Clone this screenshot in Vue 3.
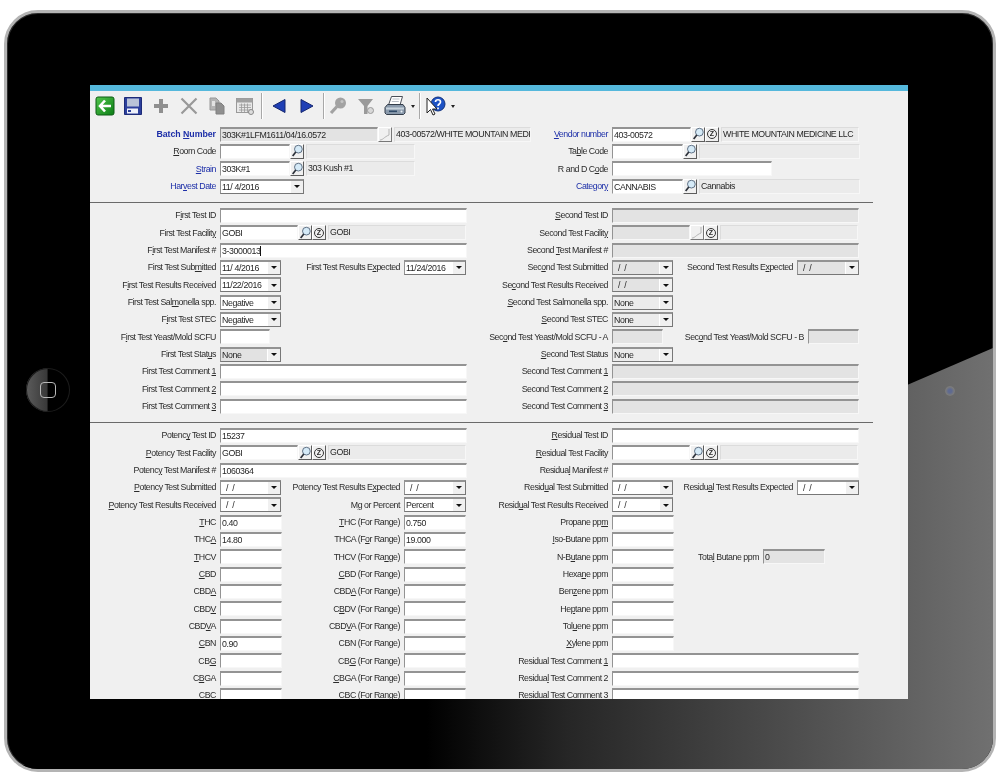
<template>
  <div class="tablet">
    <!-- bezel bits -->
    <div class="home"><span class="home-key"></span></div>
    <div class="camera"></div>

    <div class="screen">
      <div class="topbar"></div>

      <div class="toolbar">
        <span class="tool">
          <svg width="20" height="20" viewBox="0 0 20 20">
            <defs>
              <linearGradient id="backFill" x1="0" y1="0" x2="1" y2="1">
                <stop offset="0" stop-color="#52c64c" />
                <stop offset="1" stop-color="#0b7d16" />
              </linearGradient>
            </defs>
            <rect x="1" y="1" width="18" height="18" rx="2" fill="url(#backFill)" stroke="#0c5c14" />
            <path d="M10 4.500 5 10l5 5.500M5.500 10H16" stroke="#fff" stroke-width="2.600" fill="none" />
          </svg>
        </span>
        <span class="tool">
          <svg width="20" height="20" viewBox="0 0 20 20">
            <path d="M1.500 1.500h17v17h-17z" fill="#2c3f9c" stroke="#1d2b78" />
            <rect x="4" y="2.500" width="12" height="8" fill="#b9c3d8" />
            <rect x="4" y="12.500" width="11" height="5" fill="#eef1fa" />
            <rect x="5" y="14" width="3" height="2" fill="#2c3f9c" />
          </svg>
        </span>
        <span class="tool">
          <svg width="20" height="20" viewBox="0 0 20 20">
            <path d="M8 3h4v5h5v4h-5v5H8v-5H3V8h5z" fill="#8f8f8f" />
          </svg>
        </span>
        <span class="tool">
          <svg width="20" height="20" viewBox="0 0 20 20">
            <path d="m2.500 2.500 15 15M17.500 2.500l-15 15" stroke="#999" stroke-width="2.200" fill="none" />
          </svg>
        </span>
        <span class="tool">
          <svg width="20" height="20" viewBox="0 0 20 20">
            <path d="M3 2h6l3 3v9H3z" fill="#b4b4b4" stroke="#999" />
            <path d="M9 7h5l3 3v8H9z" fill="#8f8f8f" stroke="#808080" />
            <path d="M5 5h3v5H5z" fill="#e2e2e2" />
          </svg>
        </span>
        <span class="tool">
          <svg width="20" height="20" viewBox="0 0 20 20">
            <rect x="1.500" y="2.500" width="16" height="14" fill="#e8e8e8" stroke="#999" />
            <rect x="1.500" y="2.500" width="16" height="4" fill="#a0a0a0" />
            <path d="M4 9h12M4 11.500h12M4 14h12M6.500 7.500V16M9.500 7.500V16M12.500 7.500V16" stroke="#999" stroke-width=".8" />
            <circle cx="16" cy="16" r="2.500" fill="#ddd" stroke="#888" />
          </svg>
        </span>

        <span class="sep"></span>

        <span class="tool">
          <svg width="20" height="20" viewBox="0 0 20 20">
            <path d="M16 3.500v13L4 10z" fill="#1f3fb5" stroke="#14266f" />
          </svg>
        </span>
        <span class="tool">
          <svg width="20" height="20" viewBox="0 0 20 20">
            <path d="M4 3.500v13L16 10z" fill="#1f3fb5" stroke="#14266f" />
          </svg>
        </span>

        <span class="sep sep-b"></span>

        <span class="tool">
          <svg width="20" height="20" viewBox="0 0 20 20">
            <circle cx="12.500" cy="7" r="5.500" fill="#a2a2a2" />
            <circle cx="14" cy="5.500" r="1.500" fill="#c4c4c4" />
            <path d="m9 10.500-6 6.500" stroke="#a2a2a2" stroke-width="3.200" fill="none" />
          </svg>
        </span>
        <span class="tool">
          <svg width="20" height="20" viewBox="0 0 20 20">
            <path d="M2 3h15l-5.500 7v8H8v-8z" fill="#9a9a9a" />
            <circle cx="14.500" cy="14.500" r="3" fill="#d8d8d8" stroke="#999" />
          </svg>
        </span>
        <span class="tool tool-print">
          <svg width="22" height="22" viewBox="0 0 22 22">
            <path d="M7.500 1.500h11L16 10H4.500z" fill="#fff" stroke="#4a4f58" />
            <path d="M8.500 4h7M7.800 6.500h7" stroke="#b9bec6" />
            <path d="M3.500 9.500h15.500l2 3v5.500l-1.500 1.500h-17L1 18v-5.500z" fill="#8a9aac" stroke="#333d4a" />
            <path d="M2 12.500h18v2H2z" fill="#c6d2dc" />
            <rect x="5" y="15.500" width="8" height="1.600" fill="#2f4a68" />
            <circle cx="17.500" cy="16.500" r="1" fill="#e8f0f6" />
          </svg>
        </span>
        <span class="drop"></span>

        <span class="sep sep-c"></span>

        <span class="tool">
          <svg width="22" height="22" viewBox="0 0 22 22">
            <circle cx="13" cy="9" r="7" fill="#1d52c4" stroke="#12327c" />
            <path d="M10.500 7c0-3 5-3 5 0 0 2-2.500 2-2.500 4M13 12.500v1.800" stroke="#fff" stroke-width="1.700" fill="none" />
            <path d="M2 3v15l3.500-3.500L8 20l2-1-2.500-5H12z" fill="#fff" stroke="#222" />
          </svg>
        </span>
        <span class="drop drop-help"></span>
      </div>

      <div class="form">
        <section v-for="(section, s) in sections" :key="s" class="section" :class="{ ruled: s < sections.length - 1 }">
          <div v-for="(column, c) in section" :key="c" class="column">
            <div v-for="(row, r) in column" :key="r" class="row">
              <template v-for="(pair, p) in row" :key="p">
                <span class="lbl" :class="[{ sub: p > 0 }, pair.tone]">
                  {{ split(pair.label)[0] }}<u>{{ split(pair.label)[1] }}</u>{{ split(pair.label)[2] }}
                </span>
                <span class="fields">
                  <template v-for="(f, i) in pair.fields" :key="i">
                    <span v-if="f.kind === 'look'" class="btn" :class="{ dead: f.dead }">
                      <svg v-if="f.dead" width="12" height="13" viewBox="0 0 12 13">
                        <path d="M1 12c3 0 4-3 9-5V1" stroke="#b5b5b5" fill="none" />
                      </svg>
                      <svg v-else width="13" height="14" viewBox="0 0 13 14">
                        <circle cx="8" cy="5" r="4.200" fill="#d5eaf7" stroke="#56677c" />
                        <path d="m5.200 8.200-3.400 4.300" stroke="#2a2f38" stroke-width="1.800" />
                      </svg>
                    </span>
                    <span v-else-if="f.kind === 'zed'" class="btn"><span class="zed">Z</span></span>
                    <span
                      v-else
                      class="box"
                      :class="[f.kind, f.tone]"
                      :style="{ width: f.w + 'px' }"
                    >
                      <span class="val" :class="{ caret: f.caret }">{{ f.v }}</span>
                      <span v-if="f.kind === 'select'" class="arrow"></span>
                    </span>
                  </template>
                </span>
              </template>
            </div>
          </div>
        </section>
      </div>
    </div>
  </div>
</template>

<script setup>
// label markup: the letter after & gets the mnemonic underline
const split = (label) => {
  const at = label.indexOf('&')
  if (at < 0) return [label, '', '']
  return [label.slice(0, at), label.charAt(at + 1), label.slice(at + 2)]
}

const EMPTY_DATE = '  /  /'

const text = (w, v = '', tone = '') => ({ kind: 'text', w, v, tone })
const desc = (w, v = '', tone = '') => ({ kind: 'desc', w, v, tone })
const select = (v = EMPTY_DATE, tone = '', w = 61) => ({ kind: 'select', w, v, tone })
const wide = (v = EMPTY_DATE, tone = '') => select(v, tone, 62)
const look = (dead = false) => ({ kind: 'look', dead })
const zed = { kind: 'zed' }
const num = (v = '') => text(62, v)

const one = (label, ...fields) => [{ label, fields }]
const two = (label, fields, label2, fields2, tone2 = '') => [
  { label, fields },
  { label: label2, fields: fields2, tone: tone2 },
]
const tinted = (row, tone = 'blue') => {
  row[0].tone = tone
  return row
}

const header = [
  [
    tinted(one('Batch &Number', text(158, '303K#1LFM1611/04/16.0572', 'off'), look(true), desc(137, '403-00572/WHITE MOUNTAIN MEDIC')), 'blue strong'),
    one('&Room Code', text(70), look(), desc(109)),
    tinted(one('&Strain', text(70, '303K#1'), look(), desc(109, '303 Kush #1'))),
    tinted(one('Har&vest Date', select('11/ 4/2016', '', 84))),
  ],
  [
    tinted(one('&Vendor number', text(79, '403-00572'), look(), zed, desc(138, 'WHITE MOUNTAIN MEDICINE LLC'))),
    one('Ta&ble Code', text(71), look(), desc(161)),
    one('R and D C&ode', text(160)),
    tinted(one('Categor&y', text(71, 'CANNABIS'), look(), desc(161, 'Cannabis'))),
  ],
]

const firstTest = [
  [
    one('F&irst Test ID', text(247)),
    one('First Test Facilit&y', text(78, 'GOBI'), look(), zed, desc(138, 'GOBI')),
    one('F&irst Test Manifest #', { ...text(247, '3-3000013'), caret: true }),
    two('First Test Sub&mitted', [select('11/ 4/2016')], 'First Test Results E&xpected', [wide('11/24/2016')]),
    one('F&irst Test Results Received', select('11/22/2016')),
    one('First Test Sal&monella spp.', select('Negative')),
    one('F&irst Test STEC', select('Negative')),
    one('F&irst Test Yeast/Mold SCFU', text(50)),
    one('First Test Stat&us', select('None', 'picked')),
    one('First Test Comment &1', text(247)),
    one('First Test Comment &2', text(247)),
    one('First Test Comment &3', text(247)),
  ],
  [
    one('&Second Test ID', text(247, '', 'off')),
    one('Second Test Facilit&y', text(78, '', 'off'), look(true), zed, desc(138)),
    one('Second &Test Manifest #', text(247, '', 'off')),
    two('Sec&ond Test Submitted', [select(EMPTY_DATE, 'off')], 'Second Test Results E&xpected', [wide(EMPTY_DATE, 'off')]),
    one('Se&cond Test Results Received', select(EMPTY_DATE, 'off')),
    one('&Second Test Salmonella spp.', select('None', 'soft')),
    one('&Second Test STEC', select('None', 'soft')),
    two('Sec&ond Test Yeast/Mold SCFU - A', [text(51, '', 'off')], 'Sec&ond Test Yeast/Mold SCFU - B', [text(51, '', 'off')]),
    one('&Second Test Status', select('None', 'soft')),
    one('Second Test Comment &1', text(247, '', 'off')),
    one('Second Test Comment &2', text(247, '', 'off')),
    one('Second Test Comment &3', text(247, '', 'off')),
  ],
]

const potency = [
  ['&THC', '0.40', '&THC (For Range)', '0.750'],
  ['THC&A', '14.80', 'THCA (F&or Range)', '19.000'],
  ['&THCV', '', 'THCV (For Ra&nge)', ''],
  ['&CBD', '', '&CBD (For Range)', ''],
  ['CBD&A', '', 'CBD&A (For Range)', ''],
  ['CBD&V', '', 'C&BDV (For Range)', ''],
  ['CBD&VA', '', 'CBD&VA (For Range)', ''],
  ['&CBN', '0.90', 'CBN (For Range)', ''],
  ['CB&G', '', 'CB&G (For Range)', ''],
  ['C&BGA', '', '&CBGA (For Range)', ''],
  ['CB&C', '', 'CBC (For Range)', ''],
].map(([name, a, range, b]) => two(name, [num(a)], range, [num(b)]))

const ppm = ['Propane pp&m', '&Iso-Butane ppm', 'N-B&utane ppm', 'Hexa&ne ppm', 'Ben&zene ppm', 'He&ptane ppm', 'Tol&uene ppm', '&Xylene ppm'].map((name) =>
  name.startsWith('N-B')
    ? two(name, [num()], 'Tota&l Butane ppm', [text(62, '0', 'off')], 'narrow')
    : one(name, num()),
)

const lastTest = [
  [
    one('Potenc&y Test ID', text(247, '15237')),
    one('&Potency Test Facility', text(78, 'GOBI'), look(), zed, desc(138, 'GOBI')),
    one('Potenc&y Test Manifest #', text(247, '1060364')),
    two('&Potency Test Submitted', [select()], 'Potency Test Results E&xpected', [wide()]),
    two('&Potency Test Results Received', [select()], 'M&g or Percent', [wide('Percent')]),
    ...potency,
  ],
  [
    one('&Residual Test ID', text(247)),
    one('&Residual Test Facility', text(78), look(), zed, desc(138)),
    one('Residua&l Manifest #', text(247)),
    two('Resid&ual Test Submitted', [select()], 'Residu&al Test Results Expected', [wide()]),
    one('Resid&ual Test Results Received', select()),
    ...ppm,
    one('Residual Test Comment &1', text(247)),
    one('Residua&l Test Comment 2', text(247)),
    one('Residua&l Test Comment 3', text(247)),
  ],
]

const sections = [header, firstTest, lastTest]
</script>

<style scoped>
.tablet {
  position: relative;
  box-sizing: border-box;
  width: 992px;
  height: 762px;
  margin: 10px 0 0 4px;
  padding: 72px 0 0 83px;
  border: 3px solid #b4b4b4;
  border-radius: 34px;
  background: #000;
  box-shadow: inset 0 0 0 1px #2c2c2c;
  overflow: hidden;
}

/* the glare across the lower right of the glass */
.tablet::before {
  content: '';
  position: absolute;
  inset: 0;
  background: linear-gradient(90deg, #000 420px, #262626 560px, #4e4e4e 790px, #707070 985px);
  clip-path: polygon(100% 335px, 100% 100%, 8px 100%);
}

.home {
  position: absolute;
  left: 19px;
  top: 355px;
  width: 44px;
  height: 44px;
  display: flex;
  align-items: center;
  justify-content: center;
  border-radius: 50%;
  background: linear-gradient(90deg, #5c5c5c, #383838 48%, #000 50%);
  box-shadow: inset 0 0 0 1px #1c1c1c;
}

.home-key {
  box-sizing: border-box;
  width: 16px;
  height: 16px;
  border: 1px solid #b8b8b8;
  border-radius: 4px;
}

.camera {
  position: absolute;
  left: 938px;
  top: 373px;
  width: 10px;
  height: 10px;
  border-radius: 50%;
  background: radial-gradient(circle, #5f6a90 25%, #7b7b7b 60%, transparent 100%);
}

.screen {
  position: relative;
  width: 818px;
  height: 614px;
  overflow: hidden;
  background: #f0f0f0;
  color: #2b2b2b;
  font-family: 'Liberation Sans', Arial, sans-serif;
  font-size: 8.8px;
  filter: blur(0.35px);
}

.topbar {
  height: 6px;
  background: #55b8dc;
}

.toolbar {
  display: flex;
  align-items: center;
  height: 30px;
  padding-left: 1px;
}

.tool {
  display: flex;
  align-items: center;
  justify-content: center;
  width: 28px;
  height: 24px;
}

.tool-print {
  margin-left: 1px;
}

.sep {
  width: 1px;
  height: 26px;
  margin: 0 3px 0 2px;
  background: #a8a8a8;
  box-shadow: 1px 0 0 #fff;
}

.sep-b {
  margin: 0 0 0 2px;
}

.sep-c {
  margin: 0 2px 0 1px;
}

.drop {
  width: 0;
  height: 0;
  margin: 0 3px 0 2px;
  border: 2px solid transparent;
  border-top: 3px solid #222;
  border-bottom: 0;
}

.drop-help {
  margin-left: 1px;
}

.form {
  width: 783px;
  padding-top: 4.500px;
}

.section {
  display: grid;
  grid-template-columns: 376px 377px;
  column-gap: 16px;
  padding-bottom: 7px;
}

.section + .section {
  padding-top: 4px;
}

.ruled {
  border-bottom: 1px solid #6a6a6a;
}

.row {
  display: flex;
  align-items: center;
  gap: 4px;
  height: 17.330px;
  white-space: pre;
}

.lbl {
  flex: none;
  width: 126px;
  text-align: right;
  letter-spacing: -0.47px;
}

.lbl.sub {
  flex: 1;
  width: auto;
}

.lbl.sub.narrow {
  flex: none;
  width: 81px;
}

.blue {
  color: #1d2fa8;
}

.strong {
  font-weight: 700;
  letter-spacing: -0.05px;
}

.fields {
  display: flex;
  flex: none;
}

.box {
  position: relative;
  flex: none;
  box-sizing: border-box;
  height: 15px;
  padding-left: 1px;
  line-height: 12px;
  letter-spacing: -0.4px;
  overflow: hidden;
  color: #262626;
  background: #fff;
  border-top: 2px solid #939393;
  border-left: 1px solid #939393;
  border-bottom: 1px solid #f7f7f7;
  border-right: 1px solid #f7f7f7;
}

.box.off {
  background: #e3e3e3;
}

.box.picked {
  background: #e2e2e2;
}

.box.soft {
  background: #ececec;
}

.box.desc {
  margin-left: 2px;
  padding-left: 1px;
  background: #ebebeb;
  border-color: #dcdcdc #f7f7f7 #f7f7f7 #dcdcdc;
  border-width: 1px;
  line-height: 13px;
}

.val.caret {
  border-right: 1px solid #111;
}

.box.select {
  border-right: 1px solid #777;
  border-bottom: 1px solid #777;
}

.arrow {
  position: absolute;
  top: 0;
  right: 0;
  display: flex;
  align-items: center;
  justify-content: center;
  width: 12px;
  height: 12px;
  background: #f0f0f0;
  border-left: 1px solid #fff;
}

.arrow::after {
  content: '';
  border: 3px solid transparent;
  border-top: 3px solid #111;
  border-bottom: 0;
}

.btn {
  flex: none;
  box-sizing: border-box;
  display: flex;
  align-items: center;
  justify-content: center;
  width: 14px;
  height: 15px;
  background: #f0f0f0;
  border: 1px solid;
  border-color: #fff #5c5c5c #5c5c5c #fff;
}

.btn.dead {
  border-color: #fff #777 #777 #fff;
}

.zed {
  box-sizing: border-box;
  width: 10px;
  height: 10px;
  border: 1px solid #333;
  border-radius: 50%;
  font-size: 7px;
  line-height: 8px;
  text-align: center;
  font-weight: 700;
}
</style>

<style>
body {
  background: #fff;
}
</style>
